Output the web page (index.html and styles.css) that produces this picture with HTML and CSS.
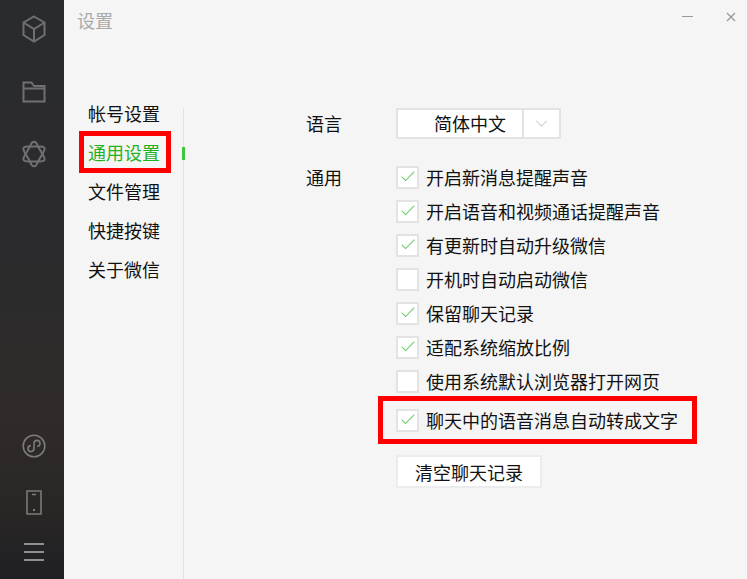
FILE: index.html
```html
<!DOCTYPE html>
<html lang="zh-CN">
<head>
  <meta charset="UTF-8">
  <title>设置</title>
  <link rel="stylesheet" href="styles.css">
</head>
<body>

  <div class="sidebar">
    <div class="side-group">
      <svg class="icon icon-cube" viewBox="0 0 24 28"><path d="M12 1.5 22.5 7.5V20L12 26.5 1.5 20V7.5ZM1.5 7.5 12 14 22.5 7.5M12 14V26.5"/></svg>
      <svg class="icon icon-folder" viewBox="0 0 24 22"><path d="M1.5 20.5V1.5H9.5L12 5H22.5V20.5ZM1.5 7.5H22.5"/></svg>
      <svg class="icon icon-flower" viewBox="0 0 24 28"><path d="M8.5 5.5C10 .5 14 .5 15.5 5.5L21.5 16C24 20.5 22 21.5 18 21.5H6C2 21.5 0 20.5 2.5 16Z"/><path d="M8.5 22.5C10 27.500 14 27.500 15.500 22.5L21.500 12C24 7.500 22 6.500 18 6.500H6C2 6.500 0 7.500 2.500 12Z"/></svg>
    </div>
    <div class="side-group side-bottom">
      <svg class="icon icon-mini" viewBox="0 0 24 24"><circle cx="12" cy="12" r="10.8"/><path d="M8.8 11.6A3 3 0 1 0 12 14.6V9.4A3 3 0 1 1 15.2 12.4"/></svg>
      <svg class="icon icon-phone" viewBox="0 0 16 25"><path d="M1 1H15V24H1ZM6 4.5H10"/><path class="dot" d="M7 19H9V21H7Z"/></svg>
      <div class="menu-lines"><span></span><span></span><span></span></div>
    </div>
  </div>

  <div class="window">
    <div class="titlebar">
      <span class="title">设置</span>
      <div class="win-buttons">
        <span class="win-min"></span>
        <svg class="win-close" viewBox="0 0 10 10"><path d="M1 1 9 9M9 1 1 9"/></svg>
      </div>
    </div>

    <div class="content">
      <div class="nav">
        <a href="#">帐号设置</a>
        <a href="#" class="active marked">通用设置</a>
        <a href="#">文件管理</a>
        <a href="#">快捷按键</a>
        <a href="#">关于微信</a>
      </div>

      <div class="panel">
        <div class="field field-lang">
          <div class="field-label">语言</div>
          <div class="select">
            <span class="select-value">简体中文</span>
            <span class="select-arrow">
              <svg viewBox="0 0 14 8"><path d="M1 1 7 7 13 1"/></svg>
            </span>
          </div>
        </div>

        <div class="field">
          <div class="field-label field-label-row">通用</div>
          <div class="options">
            <div class="option"><span class="box on"></span>开启新消息提醒声音</div>
            <div class="option"><span class="box on"></span>开启语音和视频通话提醒声音</div>
            <div class="option"><span class="box on"></span>有更新时自动升级微信</div>
            <div class="option"><span class="box"></span>开机时自动启动微信</div>
            <div class="option"><span class="box on"></span>保留聊天记录</div>
            <div class="option"><span class="box on"></span>适配系统缩放比例</div>
            <div class="option"><span class="box"></span>使用系统默认浏览器打开网页</div>
            <div class="option option-last marked"><span class="box on"></span>聊天中的语音消息自动转成文字</div>
            <button type="button" class="clear-btn">清空聊天记录</button>
          </div>
        </div>
      </div>
    </div>
  </div>

</body>
</html>
```

FILE: styles.css
```css
body {
  margin: 0;
  width: 747px;
  height: 579px;
  overflow: hidden;
  display: flex;
  font-family: "Noto Sans CJK SC", "Liberation Sans", sans-serif;
  font-size: 18px;
  color: #111;
  background-color: #f5f5f5;
}

/* left dark bar */
.sidebar {
  width: 64px;
  box-sizing: border-box;
  padding-left: 4px;
  flex-shrink: 0;
  display: flex;
  flex-direction: column;
  justify-content: space-between;
  align-items: center;
  background: linear-gradient(180deg, #2a2b2e 0%, #2b2b2d 45%, #302b29 72%, #292625 88%, #1f2024 100%);
}

.side-group {
  display: flex;
  flex-direction: column;
  align-items: center;
  padding-top: 15px;
}

.side-bottom {
  padding-top: 0;
  padding-bottom: 18px;
}

.icon {
  display: block;
  fill: none;
  stroke: #707073;
  stroke-width: 2;
}

.icon-cube {
  width: 24px;
  height: 28px;
}

.icon-folder {
  width: 24px;
  height: 22px;
  margin-top: 38px;
}

.icon-flower {
  width: 24px;
  height: 28px;
  margin-top: 37px;
}

.icon-mini {
  width: 24px;
  height: 24px;
  stroke: #7b7a79;
  stroke-width: 1.6;
}

.icon-phone {
  width: 16px;
  height: 25px;
  margin-top: 32px;
  stroke: #7b7a79;
  stroke-width: 1.6;
}

.icon-phone .dot {
  fill: #7b7a79;
  stroke: none;
}

.menu-lines {
  display: flex;
  flex-direction: column;
  gap: 6px;
  margin-top: 28px;
}

.menu-lines span {
  display: block;
  width: 20px;
  height: 2px;
  background-color: #8f8f90;
}

/* main window */
.window {
  flex: 1;
  display: flex;
  flex-direction: column;
  min-width: 0;
}

.titlebar {
  height: 42px;
  flex-shrink: 0;
  display: flex;
  justify-content: space-between;
  padding-left: 13px;
}

.title {
  color: #a9a9a9;
  line-height: 40px;
}

.win-buttons {
  display: flex;
  align-items: flex-start;
}

.win-min {
  width: 11px;
  height: 1px;
  margin-top: 16px;
  background-color: #999;
}

.win-close {
  width: 10px;
  height: 10px;
  margin: 12px 11px 0 33px;
  fill: none;
  stroke: #999;
  stroke-width: 1.3;
}

.content {
  flex: 1;
  display: flex;
}

.nav {
  width: 95px;
  flex-shrink: 0;
  padding: 59px 0 0 24px;
}

.nav a {
  display: block;
  position: relative;
  height: 24px;
  line-height: 24px;
  margin-bottom: 15px;
  color: #111;
  text-decoration: none;
}

.nav a.active {
  color: #1fb31f;
}

.nav a.active::before {
  content: "";
  position: absolute;
  left: 94px;
  top: 7px;
  width: 3px;
  height: 13px;
  background-color: #3fc63f;
}

.panel {
  flex: 1;
  margin-top: 66px;
  padding-left: 122px;
  border-left: 1px solid #e2e2e2;
}

.field {
  display: flex;
}

.field-lang {
  margin-bottom: 21px;
}

.field-label {
  width: 90px;
  flex-shrink: 0;
  line-height: 31px;
}

.field-label-row {
  line-height: 34px;
}

.select {
  width: 165px;
  height: 31px;
  box-sizing: border-box;
  display: flex;
  background-color: #fff;
  border: 2px solid #e3e3e3;
}

.select-value {
  width: 124px;
  padding-left: 36px;
  box-sizing: border-box;
  line-height: 27px;
}

.select-arrow {
  flex: 1;
  display: flex;
  justify-content: center;
  align-items: center;
  border-left: 2px solid #e3e3e3;
}

.select-arrow svg {
  width: 13px;
  height: 7px;
  fill: none;
  stroke: #d4d4d4;
  stroke-width: 1.4;
}

.option {
  position: relative;
  height: 34px;
  display: flex;
  align-items: center;
  white-space: nowrap;
}

.option-last {
  margin-top: 5px;
}

.box {
  position: relative;
  width: 23px;
  height: 23px;
  box-sizing: border-box;
  flex-shrink: 0;
  margin-right: 7px;
  background-color: #fff;
  border: 2px solid #e3e3e3;
}

/* check mark */
.box.on::after {
  content: "";
  position: absolute;
  left: 7px;
  top: 0;
  width: 5px;
  height: 12px;
  border: solid #6ccb6c;
  border-width: 0 1.7px 1.7px 0;
  transform: rotate(45deg);
}

.clear-btn {
  display: block;
  width: 146px;
  height: 33px;
  margin-top: 18px;
  padding: 0;
  font-family: inherit;
  font-size: 18px;
  color: #111;
  background-color: #fff;
  border: 2px solid #ececec;
}

/* red annotation boxes drawn over the screenshot */
.marked::after {
  content: "";
  position: absolute;
  border: 5px solid #ff0000;
  pointer-events: none;
}

.nav a.marked::after {
  left: -9px;
  top: -9px;
  width: 82px;
  height: 32px;
}

.option.marked::after {
  left: -18px;
  top: -7px;
  width: 309px;
  height: 38px;
}
```
